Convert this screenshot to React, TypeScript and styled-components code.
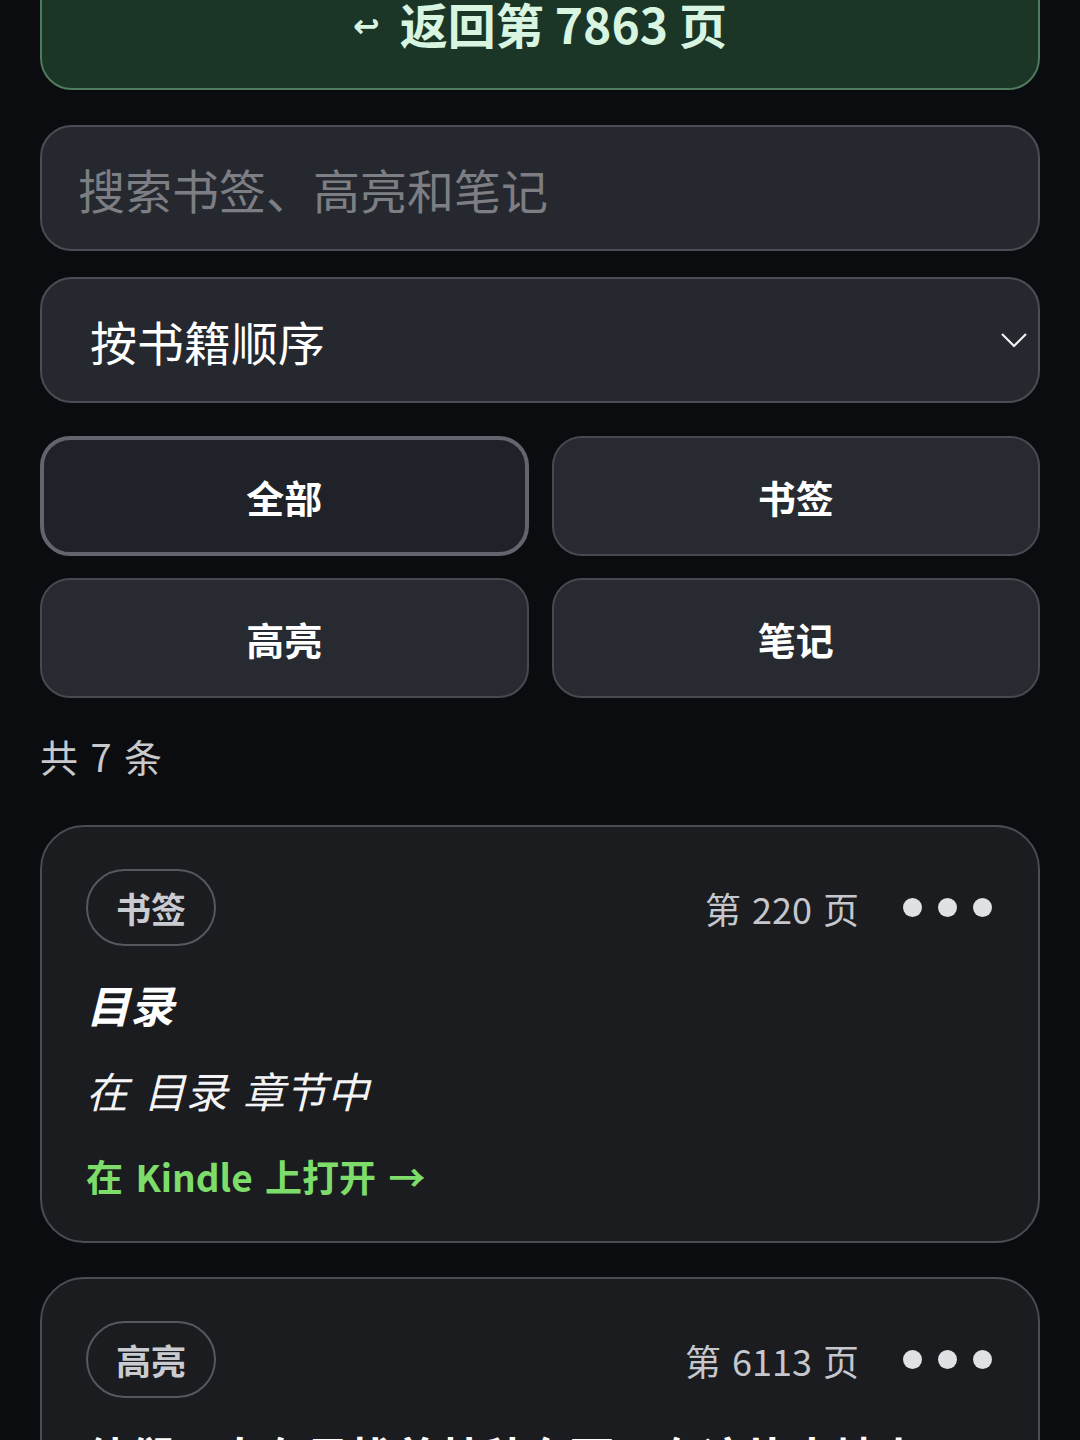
import * as React from 'react';
import styled, {createGlobalStyle} from 'styled-components';

const GlobalStyle = createGlobalStyle`
    html, body {
        margin: 0;
        padding: 0;
        background: #0b0c0f;
    }
    body {
        font-family: "Noto Sans CJK SC", "Noto Sans", sans-serif;
        color: #f2f3f5;
        overflow: hidden;
    }
`;

const Page = styled.div`
    display: flex;
    flex-direction: column;
    padding: 0 40px;
    height: 1440px;
    overflow: hidden;
    & > * {
        flex-shrink: 0;
    }
`;

// page is scrolled a little, so the back button sits partly above the top edge
const BackButton = styled.button`
    margin-top: -44px;
    height: 134px;
    border-radius: 0 0 32px 32px;
    border: 2px solid #4f7b5e;
    background: #1b3526;
    color: #d8f5e2;
    font-family: inherit;
    font-size: 48px;
    font-weight: 700;
    display: flex;
    align-items: center;
    justify-content: center;
    gap: 20px;
    padding: 0;
    & > .hook {
        font-family: "DejaVu Sans", sans-serif;
        font-size: 32px;
        font-weight: 700;
        margin-top: 6px;
    }
`;

const Field = styled.div<{$inset: number}>`
    height: 126px;
    box-sizing: border-box;
    border: 2px solid #4a4d54;
    border-radius: 32px;
    background: #25282e;
    display: flex;
    align-items: center;
    justify-content: space-between;
    padding: 0 10px 0 ${p => p.$inset}px;
`;

const SearchField = styled(Field)`
    margin-top: 35px;
`;

const SortField = styled(Field)`
    margin-top: 26px;
`;

const Placeholder = styled.span`
    font-size: 47px;
    color: #7c7e83;
`;

const SortLabel = styled.span`
    font-size: 47px;
    color: #ffffff;
`;

const FilterGrid = styled.div`
    margin-top: 33px;
    display: grid;
    grid-template-columns: 1fr 1fr;
    gap: 22px 23px;
`;

const FilterButton = styled.div<{$active?: boolean}>`
    height: 120px;
    box-sizing: border-box;
    border-radius: 30px;
    border: ${p => (p.$active ? '4px solid #62656d' : '2px solid #46494f')};
    background: ${p => (p.$active ? '#1f2228' : '#272a30')};
    display: flex;
    align-items: center;
    justify-content: center;
    font-size: 38px;
    font-weight: 700;
    color: #ffffff;
`;

const Count = styled.div`
    margin-top: 33px;
    font-size: 38px;
    line-height: 50px;
    color: #c9c9cb;
    word-spacing: 4px;
`;

const Card = styled.div`
    margin-top: 44px;
    box-sizing: border-box;
    border: 2px solid #4a4c52;
    border-radius: 44px;
    background: #1a1c20;
    padding: 42px 44px 40px;
    display: flex;
    flex-direction: column;
    & + & {
        margin-top: 34px;
    }
`;

const CardHead = styled.div`
    display: flex;
    align-items: center;
    justify-content: space-between;
`;

const Tag = styled.span`
    height: 77px;
    box-sizing: border-box;
    padding: 0 28px;
    border: 2px solid #55585e;
    border-radius: 40px;
    display: inline-flex;
    align-items: center;
    font-size: 35px;
    font-weight: 700;
    color: #c9cbd0;
`;

const Meta = styled.div`
    display: flex;
    align-items: center;
    gap: 44px;
    padding-right: 2px;
`;

const PageNo = styled.span`
    font-size: 36px;
    color: #c5c7cc;
    word-spacing: 3px;
`;

const Dots = styled.span`
    display: flex;
    gap: 16px;
    & > i {
        width: 19px;
        height: 19px;
        border-radius: 50%;
        background: #e0e1e5;
    }
`;

const Title = styled.div<{$italic?: boolean}>`
    margin-top: 30px;
    font-size: 44px;
    line-height: 57px;
    font-weight: 700;
    font-style: ${p => (p.$italic ? 'italic' : 'normal')};
    color: #ffffff;
`;

const Context = styled.div`
    margin-top: 28px;
    font-size: 42px;
    line-height: 57px;
    font-style: italic;
    color: #f4f4f6;
    word-spacing: 6px;
`;

const OpenLink = styled.a`
    margin-top: 33px;
    font-size: 37px;
    line-height: 50px;
    font-weight: 700;
    color: #7ddc6a;
    text-decoration: none;
    word-spacing: 4px;
`;

const Chevron = () => (
    <svg width="28" height="16" viewBox="0 0 28 16">
        <polyline points="2,2 14,14 26,2" fill="none" stroke="#f2f2f2" strokeWidth="2.2" />
    </svg>
);

type Entry = {kind: string; page: number; title: string; italic?: boolean; chapter?: string};

const entries: Entry[] = [
    {kind: '书签', page: 220, title: '目录', italic: true, chapter: '在 目录 章节中'},
    {kind: '高亮', page: 6113, title: '他们一直在寻找着某种东西，在这片土地上'},
];

const filters = ['全部', '书签', '高亮', '笔记'];

const App: React.FC = () => {
    const [active, setActive] = React.useState('全部');

    return <>
        <GlobalStyle />
        <Page>
            <BackButton><span className="hook">↩</span>返回第 7863 页</BackButton>
            <SearchField $inset={36}>
                <Placeholder>搜索书签、高亮和笔记</Placeholder>
            </SearchField>
            <SortField $inset={48}>
                <SortLabel>按书籍顺序</SortLabel>
                <Chevron />
            </SortField>
            <FilterGrid>
                {filters.map(f => (
                    <FilterButton key={f} $active={f === active} onClick={() => setActive(f)}>{f}</FilterButton>
                ))}
            </FilterGrid>
            <Count>共 7 条</Count>
            {entries.map(e => (
                <Card key={e.page}>
                    <CardHead>
                        <Tag>{e.kind}</Tag>
                        <Meta>
                            <PageNo>第 {e.page} 页</PageNo>
                            <Dots><i /><i /><i /></Dots>
                        </Meta>
                    </CardHead>
                    <Title $italic={e.italic}>{e.title}</Title>
                    {e.chapter && <Context>{e.chapter}</Context>}
                    <OpenLink href="#">在 Kindle 上打开 →</OpenLink>
                </Card>
            ))}
        </Page>
    </>;
};

export default App;
